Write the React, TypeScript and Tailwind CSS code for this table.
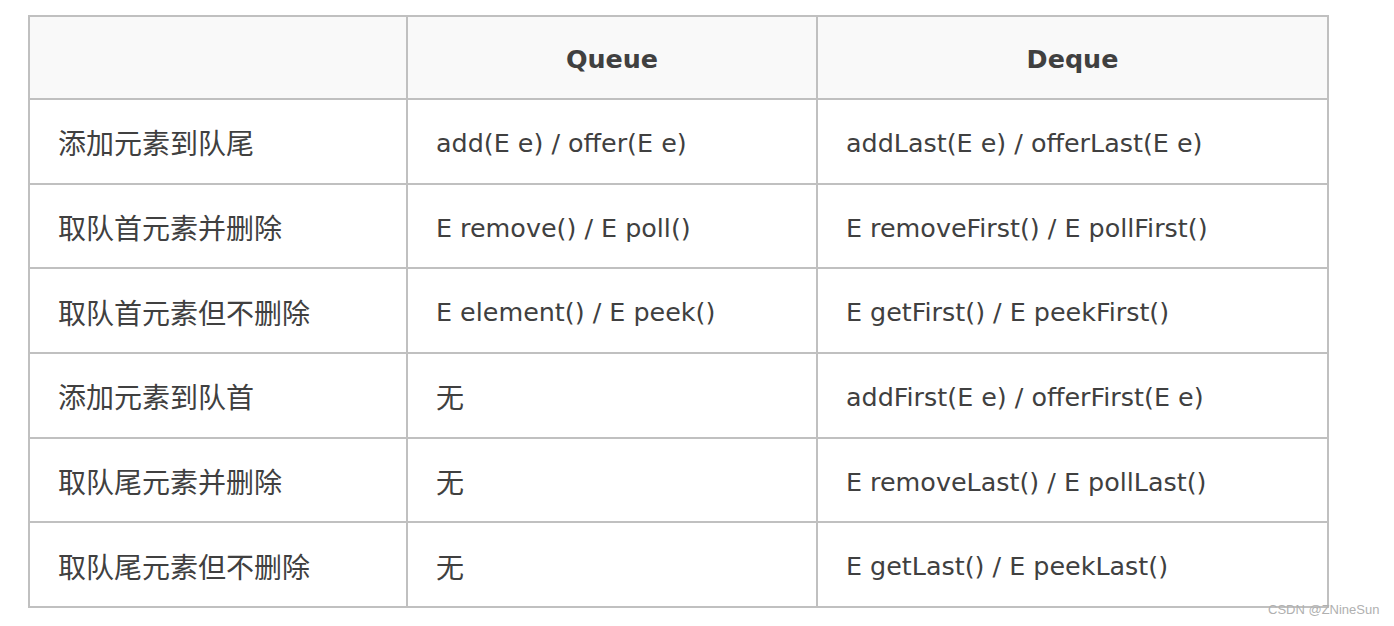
const rows = [
  ['添加元素到队尾', 'add(E e) / offer(E e)', 'addLast(E e) / offerLast(E e)'],
  ['取队首元素并删除', 'E remove() / E poll()', 'E removeFirst() / E pollFirst()'],
  ['取队首元素但不删除', 'E element() / E peek()', 'E getFirst() / E peekFirst()'],
  ['添加元素到队首', '无', 'addFirst(E e) / offerFirst(E e)'],
  ['取队尾元素并删除', '无', 'E removeLast() / E pollLast()'],
  ['取队尾元素但不删除', '无', 'E getLast() / E peekLast()'],
]

const cjk = "font-['Noto_Sans_CJK_SC',sans-serif] text-[28px] pt-[2px]"
const latin = "font-['DejaVu_Sans','Noto_Sans_CJK_SC',sans-serif] text-[25.4px] pt-[5px]"

function Cell({ text }: { text: string }) {
  const isCjk = /[\u4e00-\u9fff]/.test(text)
  return (
    <div className={`flex h-[82.67px] items-center bg-white pl-[28px] leading-none text-[#404040] ${isCjk ? cjk : latin}`}>
      {text}
    </div>
  )
}

export default function App() {
  return (
    <div className="relative h-[626px] w-[1394px] overflow-hidden bg-white">
      <div className="ml-[28px] mt-[15px] grid w-[1301px] grid-cols-[376px_408px_509px] gap-[2px] bg-[#c0c0c0] p-[2px]">
        {/* header */}
        <div className="h-[81px] bg-[#f9f9f9]" />
        <div className="flex h-[81px] items-center justify-center bg-[#f9f9f9] pt-[4px] font-['DejaVu_Sans',sans-serif] text-[25.4px] font-bold leading-none text-[#404040]">
          Queue
        </div>
        <div className="flex h-[81px] items-center justify-center bg-[#f9f9f9] pt-[4px] font-['DejaVu_Sans',sans-serif] text-[25.4px] font-bold leading-none text-[#404040]">
          Deque
        </div>

        {rows.map((r) => (
          <div key={r[0]} className="contents">
            <Cell text={r[0]} />
            <Cell text={r[1]} />
            <Cell text={r[2]} />
          </div>
        ))}
      </div>

      {/* watermark */}
      <div className="absolute left-[1268px] top-[602px] font-['Liberation_Sans',sans-serif] text-[13px] leading-[16px] text-[#b0b0b0]">
        CSDN @ZNineSun
      </div>
    </div>
  )
}
